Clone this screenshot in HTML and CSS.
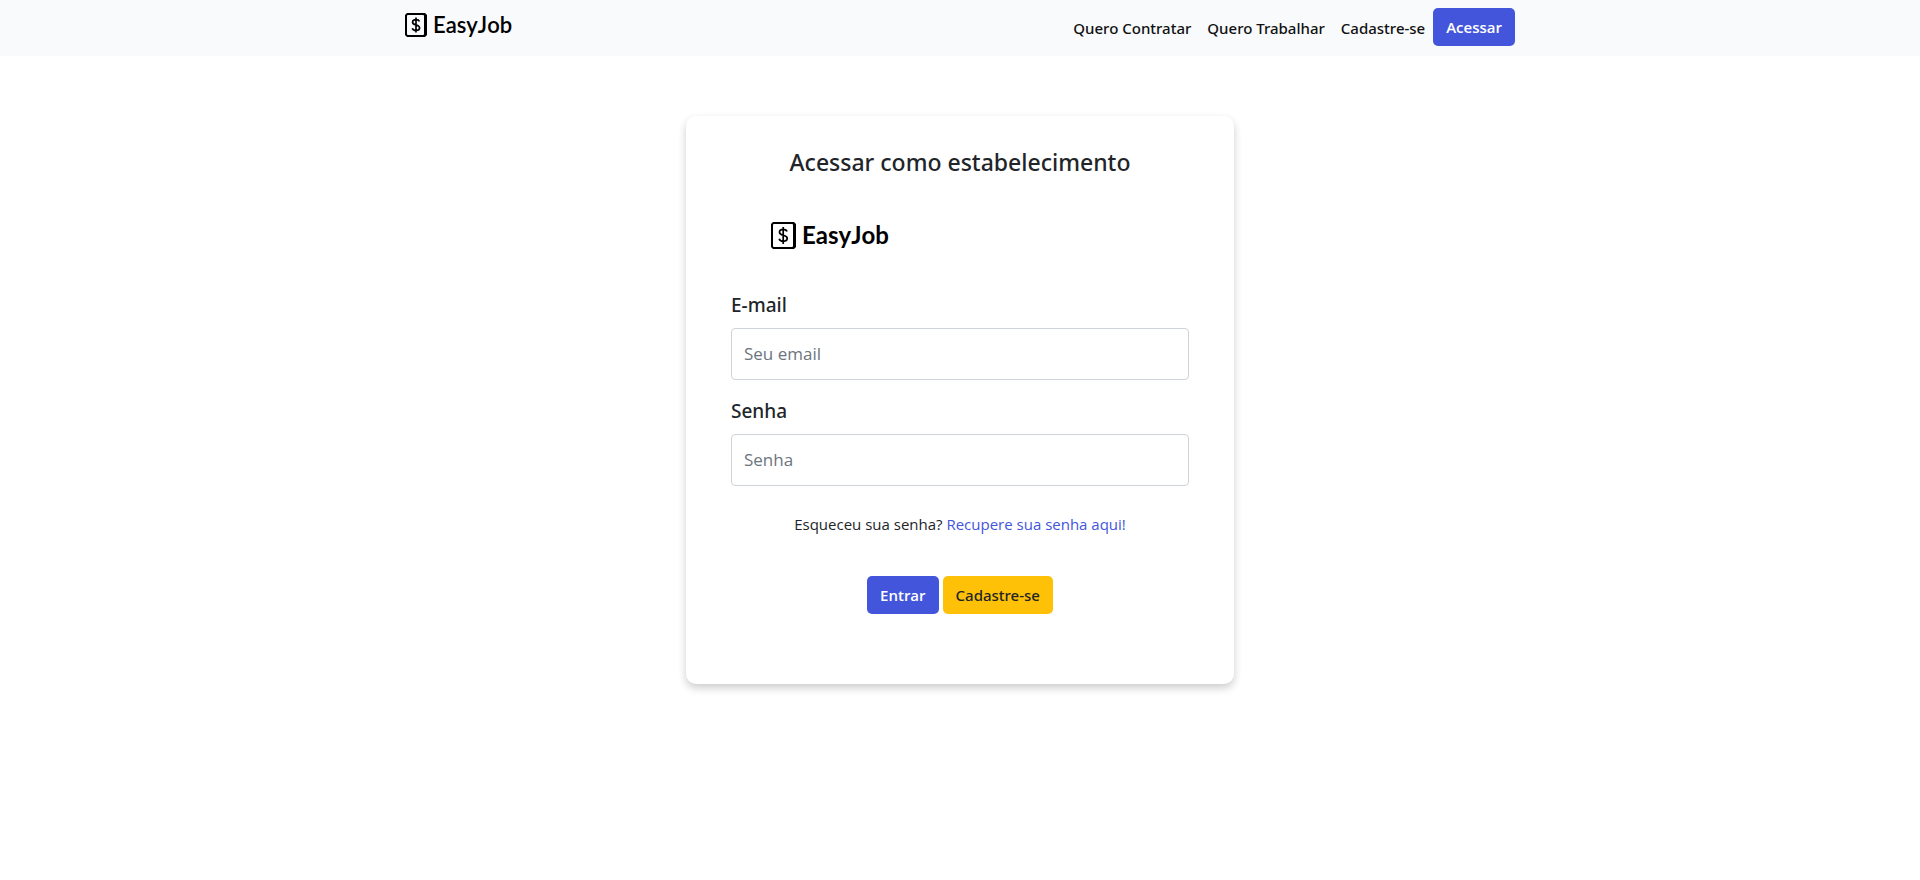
FILE: index.html
```html
<!DOCTYPE html>
<html lang="pt-BR">
<head>
<meta charset="utf-8">
<meta name="viewport" content="width=device-width, initial-scale=1">
<title>EasyJob</title>
<link rel="stylesheet" href="styles.css">
</head>
<body>
<header class="navbar">
  <div class="container">
    <a class="brand" href="#">
      <svg class="brand-icon" viewBox="0 0 22 24" aria-hidden="true"><path d="M2 0h18l2 2v20l-2 2H2l-2-2V2z" fill="#000"/><rect x="2" y="2" width="17" height="20" rx="1" fill="#f8fafc"/><path d="M14.500 8.500C14 7.200 12.800 6.700 11 6.700c-2 0-3.400.8-3.400 2.500 0 3.700 7 1.800 7 5.500 0 1.800-1.500 2.700-3.600 2.700-2 0-3.300-.7-3.700-2.200M11 4.500v15" fill="none" stroke="#000" stroke-width="1.700"/></svg>
      <span>EasyJob</span>
    </a>
    <nav class="nav">
      <a class="nav-link" href="#">Quero Contratar</a>
      <a class="nav-link" href="#">Quero Trabalhar</a>
      <a class="nav-link" href="#">Cadastre-se</a>
      <a class="btn btn-primary" href="#">Acessar</a>
    </nav>
  </div>
</header>
<main class="page">
  <form class="card">
    <h1 class="title">Acessar como estabelecimento</h1>
    <div class="brand brand-large">
      <svg class="brand-icon" viewBox="0 0 25 27" aria-hidden="true"><path d="M2 0h21l2 2v23l-2 2H2l-2-2V2z" fill="#000"/><rect x="2" y="2" width="20" height="23" rx="1" fill="#fff"/><path d="M16 9.500c-.5-1.500-1.800-2.100-3.800-2.100-2.200 0-3.700.9-3.700 2.800 0 4.100 7.700 2 7.700 6.100 0 2-1.700 3-4 3-2.200 0-3.600-.8-4-2.500M12.200 5v17" fill="none" stroke="#000" stroke-width="1.700"/></svg>
      <span>EasyJob</span>
    </div>
    <div class="field">
      <label class="label" for="email">E-mail</label>
      <input class="input" id="email" type="email" placeholder="Seu email">
    </div>
    <div class="field">
      <label class="label" for="senha">Senha</label>
      <input class="input" id="senha" type="password" placeholder="Senha">
    </div>
    <p class="hint">Esqueceu sua senha? <a class="link" href="#">Recupere sua senha aqui!</a></p>
    <div class="actions">
      <button class="btn btn-primary" type="submit">Entrar</button>
      <button class="btn btn-warning" type="button">Cadastre-se</button>
    </div>
  </form>
</main>
</body>
</html>
```
FILE: styles.css
```css
* { box-sizing: border-box; }

body {
  margin: 0;
  background: #fff;
  color: #212529;
  font: 400 15px/24px "Open Sans", "Noto Sans", sans-serif;
}

a { text-decoration: none; }

.navbar { background: #f8fafc; }

.container {
  max-width: 1140px;
  margin: 0 auto;
  padding: 8px 15px;
  display: flex;
  align-items: flex-start;
  justify-content: space-between;
}

.brand {
  display: flex;
  align-items: center;
  gap: 6px;
  padding-top: 2px;
  color: #000;
  font-family: Lato, "Open Sans", sans-serif;
  font-size: 22px;
  line-height: 30px;
  font-weight: 600;
  font-kerning: none;
}

.brand-icon { width: 22px; height: 24px; }

.nav { display: flex; align-items: flex-start; }

.nav-link {
  padding: 8px;
  line-height: 24px;
  font-family: "Noto Sans", sans-serif;
  font-weight: 500;
  color: #111;
}

.btn {
  display: block;
  padding: 6px 12px;
  border: 1px solid transparent;
  border-radius: 5px;
  font: inherit;
  font-weight: 500;
  cursor: pointer;
}

.btn-primary { background: #4355db; color: #fff; font-weight: 600; }
.btn-warning { background: #ffc107; color: #212529; font-family: "Noto Sans", sans-serif; }

.page { padding: 60px 16px; }

.card {
  max-width: 548px;
  margin: 0 auto;
  padding: 30px 45px 70px;
  background: #fff;
  border-radius: 10px;
  box-shadow: 0 4px 8px rgba(0, 0, 0, 0.2);
}

.title {
  margin: 0 0 40px;
  text-align: center;
  font-family: "Noto Sans", sans-serif;
  font-size: 23px;
  line-height: 32px;
  font-weight: 500;
}

.brand-large {
  padding: 0 40px;
  margin-bottom: 38px;
  font-size: 24px;
  line-height: 34px;
  font-weight: 700;
}

.brand-large .brand-icon { width: 25px; height: 27px; }

.field { margin-bottom: 16px; }

.label {
  display: block;
  margin-bottom: 8px;
  font-family: "Noto Sans", sans-serif;
  font-size: 19px;
  line-height: 30px;
  font-weight: 500;
}

.input {
  display: block;
  width: 100%;
  padding: 10px 12px;
  border: 1px solid #ced4da;
  border-radius: 4px;
  background: #fff;
  color: #212529;
  font: inherit;
  font-size: 17px;
  line-height: 30px;
}

.input::placeholder { color: #6c757d; opacity: 1; }

.hint { margin: 26px 0 40px; text-align: center; }

.link { color: #4355db; }

.actions { display: flex; justify-content: center; gap: 4px; }
```
